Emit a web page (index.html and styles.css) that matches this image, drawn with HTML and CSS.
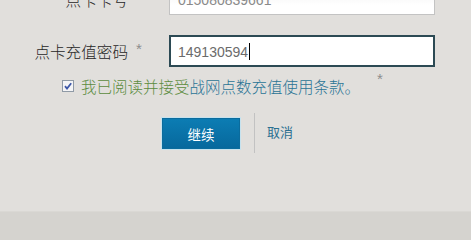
FILE: index.html
```html
<!DOCTYPE html>
<html lang="zh-CN">
<head>
<meta charset="utf-8">
<title>点卡充值</title>
<link rel="stylesheet" href="styles.css">
</head>
<body>
<div class="page">
  <form class="form">
    <div class="row row-first">
      <label class="label">点卡卡号</label>
      <span class="star"></span>
      <div class="input input-plain">015080839661</div>
    </div>
    <div class="row row-second">
      <label class="label">点卡充值密码</label>
      <span class="star">*</span>
      <div class="input input-focus">149130594<span class="caret"></span></div>
    </div>
    <div class="agree">
      <span class="check">
        <svg width="12" height="12" viewBox="0 0 12 12">
          <rect x="0.5" y="0.5" width="11" height="11" fill="#f4f4f6" stroke="#8f9aa6"/>
          <path d="M3 6.2 L5 8.6 L9.2 3.2" fill="none" stroke="#3d57a8" stroke-width="1.8"/>
        </svg>
      </span>
      <span class="agree-text">我已阅读并接受</span><a class="agree-link">战网点数充值使用条款。</a>
      <span class="star star-agree">*</span>
    </div>
    <div class="actions">
      <button type="button" class="btn">继续</button>
      <span class="sep"></span>
      <a class="cancel">取消</a>
    </div>
  </form>
  <div class="footer-band"></div>
</div>
</body>
</html>
```
FILE: styles.css
```css
html {
  margin: 0;
  padding: 0;
  background: #d5d3cf;
}
body {
  margin: 0;
  padding: 0;
  height: 226px;
  overflow: hidden;
  background: #e1dfdc;
  font-family: "Liberation Sans", Arial, "Noto Sans CJK SC", sans-serif;
  width: 471px;
}
.page {
  display: flex;
  flex-direction: column;
  height: 226px;
}
.form {
  display: flex;
  flex-direction: column;
  flex: 1;
  margin-top: -17px;
}
.row {
  display: flex;
  align-items: center;
  height: 32px;
}
.row-second {
  margin-top: 20px;
}
.label {
  width: 128px;
  text-align: right;
  font-family: "Noto Sans CJK SC", sans-serif;
  font-weight: 300;
  font-size: 15.6px;
  color: #262626;
  line-height: 20px;
}
.star {
  width: 41px;
  align-self: flex-start;
  padding-left: 8px;
  box-sizing: border-box;
  color: #8d8d8d;
  font-size: 15px;
  line-height: 20px;
  margin-top: 4px;
}
.input {
  width: 266px;
  height: 32px;
  box-sizing: border-box;
  padding-left: 8px;
  font-size: 14px;
  color: #6b6b6b;
  display: flex;
  align-items: center;
}
.input-plain {
  border: 1px solid #c3c3c3;
  background: linear-gradient(#ededed, #ffffff 70%);
  color: #8a8a8a;
  padding-top: 1px;
}
.input-focus {
  border: 2px solid #2c4a54;
  background: #ffffff;
  padding-left: 7px;
  padding-top: 1px;
}
.caret {
  display: inline-block;
  width: 1px;
  height: 17px;
  background: #000;
  margin-left: 1px;
}
.agree {
  display: flex;
  align-items: center;
  margin-top: 8px;
  padding-left: 62px;
  height: 22px;
  font-family: "Noto Sans CJK SC", sans-serif;
  font-weight: 300;
  font-size: 15.5px;
  line-height: 22px;
}
.check {
  width: 12px;
  height: 12px;
  display: flex;
  margin-right: 7px;
}
.agree-text {
  color: #5b8c3e;
}
.agree-link {
  color: #2a7495;
}
.star-agree {
  width: auto;
  padding-left: 17px;
  margin-top: -6px;
  font-family: "Liberation Sans", Arial, sans-serif;
}
.actions {
  display: flex;
  align-items: center;
  margin-top: 16px;
  padding-left: 161px;
  height: 40px;
}
.btn {
  width: 80px;
  height: 33px;
  box-sizing: border-box;
  border: 1px solid #c6e2ee;
  outline: none;
  background: linear-gradient(#0c7db4, #07689c);
  box-shadow: inset 0 0 0 1px #0b6c9d;
  color: #ffffff;
  font-family: "Noto Sans CJK SC", sans-serif;
  font-size: 13.5px;
  padding: 0;
  margin-top: 1px;
}
.sep {
  width: 1px;
  height: 40px;
  background: #c2c2c2;
  margin-left: 13px;
}
.cancel {
  margin-left: 12px;
  color: #2b6f91;
  font-family: "Noto Sans CJK SC", sans-serif;
  font-size: 13px;
  margin-top: -4px;
}
.footer-band {
  height: 14px;
  background: #d5d3cf;
  border-top: 1px solid #dad8d4;
}
```
